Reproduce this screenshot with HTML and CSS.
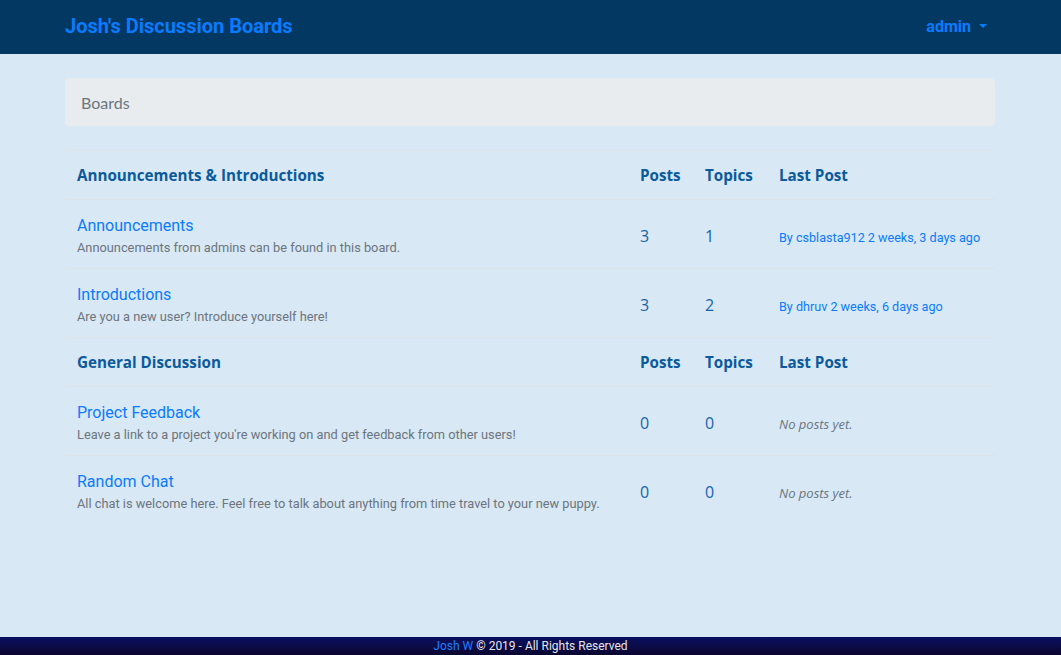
FILE: index.html
```html
<!DOCTYPE html>
<html lang="en">
<head>
<meta charset="utf-8">
<title>Josh's Discussion Boards</title>
<link rel="stylesheet" href="styles.css">
</head>
<body>
<nav class="navbar">
  <div class="nav-inner">
    <a class="brand" href="#">Josh's Discussion Boards</a>
    <a class="user" href="#">admin <span class="caret"></span></a>
  </div>
</nav>
<main class="container">
  <div class="breadcrumb">Boards</div>
  <table class="boards">
    <colgroup>
      <col class="c-name"><col class="c-posts"><col class="c-topics"><col class="c-last">
    </colgroup>
    <tbody>
      <tr class="section">
        <th>Announcements &amp; Introductions</th><th>Posts</th><th>Topics</th><th>Last Post</th>
      </tr>
      <tr class="board">
        <td><a class="title" href="#">Announcements</a><div class="desc">Announcements from admins can be found in this board.</div></td>
        <td class="num">3</td><td class="num">1</td>
        <td><a class="last" href="#">By csblasta912 2 weeks, 3 days ago</a></td>
      </tr>
      <tr class="board">
        <td><a class="title" href="#">Introductions</a><div class="desc">Are you a new user? Introduce yourself here!</div></td>
        <td class="num">3</td><td class="num">2</td>
        <td><a class="last" href="#">By dhruv 2 weeks, 6 days ago</a></td>
      </tr>
      <tr class="section">
        <th>General Discussion</th><th>Posts</th><th>Topics</th><th>Last Post</th>
      </tr>
      <tr class="board">
        <td><a class="title" href="#">Project Feedback</a><div class="desc">Leave a link to a project you're working on and get feedback from other users!</div></td>
        <td class="num">0</td><td class="num">0</td>
        <td><em class="none">No posts yet.</em></td>
      </tr>
      <tr class="board">
        <td><a class="title" href="#">Random Chat</a><div class="desc">All chat is welcome here. Feel free to talk about anything from time travel to your new puppy.</div></td>
        <td class="num">0</td><td class="num">0</td>
        <td><em class="none">No posts yet.</em></td>
      </tr>
    </tbody>
  </table>
</main>
<footer class="footer"><a href="#">Josh W</a> © 2019 - All Rights Reserved</footer>
</body>
</html>
```
FILE: styles.css
```css
* { box-sizing: border-box; }
html, body { height: 100%; }
body {
  margin: 0;
  background: #d8e8f5;
  font-family: "Noto Sans", "Open Sans", sans-serif;
  color: #212529;
  display: flex;
  flex-direction: column;
  min-height: 100vh;
}
a { text-decoration: none; color: #007bff; }

.navbar {
  background: #023862;
  height: 54px;
  padding: 0 66px 0 65px;
}
.nav-inner {
  height: 100%;
  display: flex;
  align-items: center;
  justify-content: space-between;
  padding-bottom: 2px;
}
.brand {
  font-family: "Roboto", sans-serif;
  font-weight: 700;
  font-size: 20px;
  color: #0a7bff;
}
.user {
  font-family: "Roboto", sans-serif;
  font-weight: 700;
  font-size: 16px;
  color: #0a7bff;
  margin-right: 8px;
  display: flex;
  align-items: center;
}
.caret {
  display: inline-block;
  width: 0; height: 0;
  margin-left: 8px;
  border-left: 4px solid transparent;
  border-right: 4px solid transparent;
  border-top: 4px solid #0a7bff;
}

.container {
  padding: 24px 66px 0 65px;
  flex: 1;
}
.breadcrumb {
  background: #e8ecef;
  border-radius: 4px;
  height: 48px;
  padding: 0 16px;
  display: flex;
  align-items: center;
  font-family: "Lato", sans-serif;
  font-size: 16px;
  color: #6c757d;
  margin-bottom: 24px;
}

.boards {
  width: 100%;
  border-collapse: collapse;
  table-layout: fixed;
}
.c-name { width: 563px; }
.c-posts { width: 65px; }
.c-topics { width: 74px; }
.c-last { width: 228px; }

.boards th {
  text-align: left;
  font-family: "Open Sans", sans-serif;
  font-weight: 700;
  font-size: 15.2px;
  color: #0a5a9c;
  padding: 12px 12px;
  line-height: 24px;
  border-top: 1px solid #dde3e8;
}
.boards td {
  padding: 14px 12px 10px;
  border-top: 1px solid #dde3e8;
  vertical-align: middle;
}
.title {
  font-family: "Roboto", sans-serif;
  font-size: 16px;
  line-height: 24px;
  color: #0a7bff;
  display: block;
}
.desc {
  font-family: "Roboto", sans-serif;
  font-size: 12.8px;
  line-height: 20px;
  color: #6c757d;
}
.num {
  font-family: "Open Sans", sans-serif;
  font-size: 16px;
  color: #1565a8;
}
.last {
  font-family: "Roboto", sans-serif;
  font-size: 12.6px;
  color: #0a7bff;
  white-space: nowrap;
}
.none {
  font-family: "Open Sans", sans-serif;
  font-size: 13px;
  color: #6c757d;
  white-space: nowrap;
}

.footer {
  height: 18px;
  background: linear-gradient(#0b1160, #0a0530);
  color: #e6e6e6;
  text-align: center;
  font-family: "Roboto", sans-serif;
  font-size: 12px;
  line-height: 19px;
}
.footer a { color: #1e7fff; }
```
